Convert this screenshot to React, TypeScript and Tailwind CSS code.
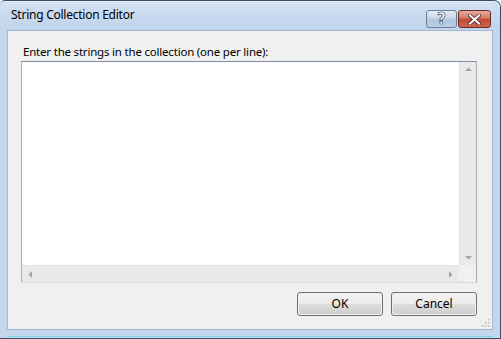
import React from "react";

function Arrow({ dir }: { dir: "up" | "down" | "left" | "right" }) {
  const pts: Record<string, string> = {
    up: "0,4 3.5,0.5 7,4",
    down: "0,0 3.5,3.5 7,0",
    left: "4,0 0.5,3.5 4,7",
    right: "0,0 3.5,3.5 0,7",
  };
  const horiz = dir === "left" || dir === "right";
  return (
    <svg width={horiz ? 4 : 7} height={horiz ? 7 : 4} viewBox={horiz ? "0 0 4 7" : "0 0 7 4"}>
      <polygon points={pts[dir]} fill="#a3a3a3" />
    </svg>
  );
}

function Btn({ label }: { label: string }) {
  return (
    <div className="w-[86px] h-[24px] rounded-[3px] border border-[#707070] p-px">
      <div className="h-full w-full rounded-[2px] flex items-center justify-center text-[12px] text-black bg-[linear-gradient(to_bottom,#f2f2f2_0%,#ebebeb_50%,#dddddd_50%,#cfcfcf_100%)]">
        {label}
      </div>
    </div>
  );
}

export default function App() {
  return (
    <div
      className="w-[501px] h-[339px] bg-[#c3d6ee] border-t border-r border-b border-[#3f4f63] rounded-tr-[7px] rounded-tl-[5px] flex flex-col overflow-hidden"
      style={{ fontFamily: '"Noto Sans", "Open Sans", sans-serif' }}
    >
      {/* title bar */}
      <div className="h-[29px] flex items-start bg-[linear-gradient(to_bottom,#d5e3f4_0%,#c6d9ef_50%,#c0d4ed_100%)] border-t border-[#e4eefa]">
        <div className="pl-[11px] pt-[5px] text-[12px] tracking-[-0.25px] text-black leading-[16px]">String Collection Editor</div>
        <div className="ml-auto mr-[9px] mt-[8px] flex gap-[1px]">
          <div className="w-[31px] h-[18px] rounded-[3px] border border-[#6f7f95] bg-[linear-gradient(to_bottom,#e3ebf5_0%,#cad8ea_45%,#b1c5de_50%,#bccfe6_100%)] flex items-center justify-center">
            <span className="text-[15px] font-bold leading-none text-white" style={{ WebkitTextStroke: "0.7px #4c5a6c", fontFamily: '"DejaVu Sans", sans-serif' }}>?</span>
          </div>
          <div className="w-[33px] h-[18px] rounded-[3px] border border-[#6a2b26] bg-[linear-gradient(to_bottom,#e9a99a_0%,#d5796a_45%,#c24935_50%,#d0644d_100%)] flex items-center justify-center">
            <svg width="13" height="11" viewBox="0 0 13 11">
              <path d="M2 1.5 L11 9.5 M11 1.5 L2 9.5" stroke="#4a2a2a" strokeWidth="3.6" strokeLinecap="square" />
              <path d="M2 1.5 L11 9.5 M11 1.5 L2 9.5" stroke="#ffffff" strokeWidth="2" strokeLinecap="square" />
            </svg>
          </div>
        </div>
      </div>
      {/* body */}
      <div className="flex-1 flex flex-col pl-[7px] pr-[7px] pb-[1px]">
        <div className="h-[300px] border border-[#a4b7cf] bg-[#f0f0f0] flex flex-col relative">
          <div className="pl-[15px] pt-[13px] text-[11.5px] tracking-[-0.2px] leading-[16px] text-black">
            Enter the strings in the collection (one per line):
          </div>
          <div className="ml-[13px] mt-[1px] w-[456px] h-[222px] border border-[#abadb3] border-t-[#7b8ea6] border-b-[#cfdbe8] bg-white flex flex-col">
            <div className="flex-1 flex">
              <div className="flex-1" />
              <div className="w-[17px] bg-[#eaeaea] border-l border-[#e3e3e3] flex flex-col items-center justify-between py-[5px]">
                <Arrow dir="up" />
                <Arrow dir="down" />
              </div>
            </div>
            <div className="h-[17px] flex">
              <div className="flex-1 bg-[#eaeaea] border-t border-[#e3e3e3] flex items-center justify-between px-[6px]">
                <Arrow dir="left" />
                <Arrow dir="right" />
              </div>
              <div className="w-[17px] bg-[#f0f0f0]" />
            </div>
          </div>
          <div className="mt-[9px] mr-[15px] flex justify-end gap-[8px]">
            <Btn label="OK" />
            <Btn label="Cancel" />
          </div>
          <svg className="absolute right-[2px] bottom-[2px]" width="9" height="9" viewBox="0 0 9 9">
            {[
              [7, 1],
              [7, 4],
              [4, 4],
              [7, 7],
              [4, 7],
              [1, 7],
            ].map(([x, y], i) => (
              <rect key={i} x={x} y={y} width="1.5" height="1.5" fill="#b8b8b8" />
            ))}
          </svg>
        </div>
        <div className="h-px bg-[#7fd3ec] mt-[6px]" />
      </div>
    </div>
  );
}
